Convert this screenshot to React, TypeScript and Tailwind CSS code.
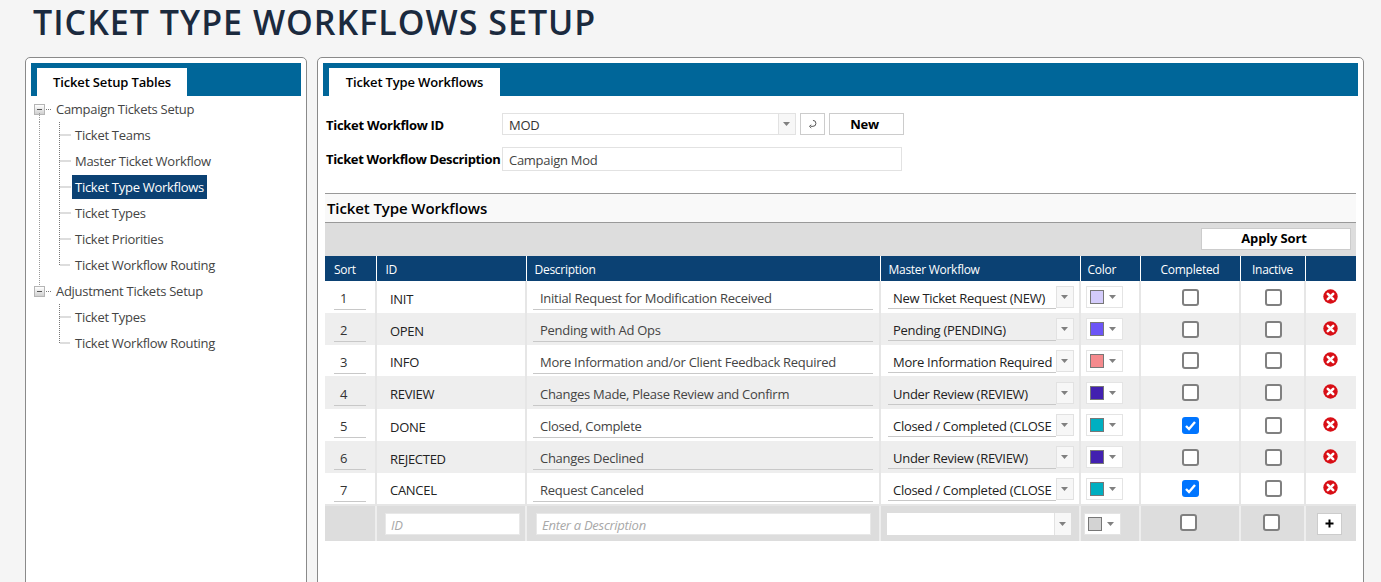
const font = { fontFamily: '"Open Sans", "Noto Sans", sans-serif' }

const rows = [
  { sort: '1', id: 'INIT', desc: 'Initial Request for Modification Received', master: 'New Ticket Request (NEW)', color: 'bg-[#d4ccfb]', done: false, h: 'h-[32px]', bg: 'bg-white' },
  { sort: '2', id: 'OPEN', desc: 'Pending with Ad Ops', master: 'Pending (PENDING)', color: 'bg-[#6c55f6]', done: false, h: 'h-[32px]', bg: 'bg-[#eeeeee]' },
  { sort: '3', id: 'INFO', desc: 'More Information and/or Client Feedback Required', master: 'More Information Required', color: 'bg-[#f58a8d]', done: false, h: 'h-[31px]', bg: 'bg-white' },
  { sort: '4', id: 'REVIEW', desc: 'Changes Made, Please Review and Confirm', master: 'Under Review (REVIEW)', color: 'bg-[#4220b0]', done: false, h: 'h-[33px]', bg: 'bg-[#eeeeee]' },
  { sort: '5', id: 'DONE', desc: 'Closed, Complete', master: 'Closed / Completed (CLOSE', color: 'bg-[#00afc1]', done: true, h: 'h-[32px]', bg: 'bg-white' },
  { sort: '6', id: 'REJECTED', desc: 'Changes Declined', master: 'Under Review (REVIEW)', color: 'bg-[#4220b0]', done: false, h: 'h-[32px]', bg: 'bg-[#eeeeee]' },
  { sort: '7', id: 'CANCEL', desc: 'Request Canceled', master: 'Closed / Completed (CLOSE', color: 'bg-[#00afc1]', done: true, h: 'h-[32px]', bg: 'bg-white' },
]

const tree = [
  {
    title: 'Campaign Tickets Setup',
    children: ['Ticket Teams', 'Master Ticket Workflow', 'Ticket Type Workflows', 'Ticket Types', 'Ticket Priorities', 'Ticket Workflow Routing'],
    trunk: true,
  },
  {
    title: 'Adjustment Tickets Setup',
    children: ['Ticket Types', 'Ticket Workflow Routing'],
    trunk: false,
  },
]

const Caret = () => (
  <svg width="8" height="4" viewBox="0 0 8 4" className="block">
    <path d="M0 0h7L3.5 4z" fill="#808080" />
  </svg>
)

const Check = ({ on }: { on: boolean }) =>
  on ? (
    <span className="flex h-[17px] w-[17px] items-center justify-center rounded-[3px] bg-[#0075ff]">
      <svg width="13" height="13" viewBox="0 0 13 13">
        <path d="M2 7l3 3 6-7" fill="none" stroke="#fff" strokeWidth="2.4" />
      </svg>
    </span>
  ) : (
    <span className="block h-[17px] w-[17px] rounded-[3px] border-2 border-[#808080] bg-white" />
  )

const DeleteIcon = () => (
  <svg width="15" height="15" viewBox="0 0 15 15" className="block">
    <circle cx="7.5" cy="7.5" r="7.2" fill="#d80f16" />
    <path d="M4.8 4.8l5.4 5.4M10.2 4.8l-5.4 5.4" stroke="#fff" strokeWidth="2.6" strokeLinecap="round" />
  </svg>
)

const Expander = () => (
  <span className="flex h-[11px] w-[11px] items-center justify-center border border-[#b5b5b5] bg-gradient-to-b from-white to-[#d0d0d0]">
    <span className="block h-[1px] w-[5px] bg-[#555]" />
  </span>
)

const Swatch = ({ color }: { color: string }) => (
  <div className="flex h-[22px] w-[37px] items-center border border-[#e4e4e4] bg-white pl-[3px]">
    <span className={`block h-[14px] w-[14px] border border-[#777] ${color}`} />
    <span className="ml-[5px]">
      <Caret />
    </span>
  </div>
)

const TreeConnector = ({ trunk, last }: { trunk: boolean; last: boolean }) => (
  <svg width="41" height="26" className="shrink-0">
    {trunk && <path d="M8.5 0v26" stroke="#999" strokeDasharray="1 1" />}
    <path d={last ? 'M28.5 0v13h11' : 'M28.5 0v26M28.5 13h11'} stroke="#777" strokeDasharray="1 1" fill="none" />
  </svg>
)

const PanelTab = ({ label, width }: { label: string; width: string }) => (
  <div className="h-[33px] bg-[#006699] pl-[6px] pt-[5px]">
    <div className={`flex h-[28px] items-center justify-center bg-white pt-[2px] text-[13px] font-semibold tracking-[-0.15px] text-black ${width}`}>{label}</div>
  </div>
)

export default function App() {
  return (
    <div className="h-[582px] overflow-hidden bg-[#f5f5f5] pl-[25px] tracking-[-0.28px]" style={font}>
      <h1 className="h-[57px] pl-[8px] text-[34px] font-semibold leading-[45px] tracking-[1px] text-[#1b2a3e]">TICKET TYPE WORKFLOWS SETUP</h1>
      <div className="flex gap-[10px]">
        {/* left tree */}
        <aside className="h-[560px] w-[282px] shrink-0 rounded-t-[5px] border border-[#8a8a8a] bg-white p-[5px]">
          <PanelTab label="Ticket Setup Tables" width="w-[150px]" />
          <div className="text-[13px] text-[#444]">
            {tree.map((group) => (
              <div key={group.title}>
                <div className="relative flex h-[26px] items-center">
                  {group.trunk ? (
                    <span className="absolute left-[8px] top-[17px] h-[9px] border-l border-dotted border-[#999]" />
                  ) : (
                    <span className="absolute left-[8px] top-0 h-[7px] border-l border-dotted border-[#999]" />
                  )}
                  <span className="ml-[3px]">
                    <Expander />
                  </span>
                  <span className="ml-[1px] w-[5px] border-t border-dotted border-[#777]" />
                  <span className="ml-[5px] pt-[2px]">{group.title}</span>
                </div>
                {group.children.map((child, i) => (
                  <div key={child} className="flex h-[26px] items-center">
                    <TreeConnector trunk={group.trunk} last={i === group.children.length - 1} />
                    <span className={child === 'Ticket Type Workflows' ? 'flex h-[24px] items-center bg-[#0b4173] px-[3px] pt-[2px] text-white' : 'px-[3px] pt-[2px]'}>{child}</span>
                  </div>
                ))}
              </div>
            ))}
          </div>
        </aside>

        {/* right content */}
        <main className="h-[560px] w-[1047px] shrink-0 rounded-t-[5px] border border-[#8a8a8a] bg-white p-[5px]">
          <PanelTab label="Ticket Type Workflows" width="w-[171px]" />
          <div className="px-[2px]">
            <div className="mt-[17px] flex h-[22px] items-center">
              <label className="w-[177px] pl-[1px] pt-[2px] text-[13px] font-bold leading-[18px] text-black">Ticket Workflow ID</label>
              <div className="flex h-[22px] w-[294px] items-center border border-[#e2e2e2] bg-white text-[13px] text-[#333]">
                <span className="flex-1 pl-[6px] pt-[3px]">MOD</span>
                <span className="flex h-full w-[17px] items-center justify-center border-l border-[#e2e2e2] bg-[#f7f7f7]">
                  <Caret />
                </span>
              </div>
              <button className="ml-[4px] flex h-[22px] w-[25px] items-center justify-center border border-[#ccc] bg-white">
                <svg width="9" height="10" viewBox="0 0 10 11">
                  <path d="M5.5 1.5a3.3 3.3 0 1 1 0 6.6H3" fill="none" stroke="#444" />
                  <path d="M3.6 6.4L1.6 8.1l2 1.9" fill="none" stroke="#444" />
                </svg>
              </button>
              <button className="ml-[4px] h-[22px] w-[75px] border border-[#ccc] bg-white pr-[4px] pt-[1px] text-[13px] font-bold text-black">New</button>
            </div>
            <div className="mt-[12px] flex h-[24px] items-center">
              <label className="w-[177px] pl-[1px] text-[13px] font-bold leading-[18px] tracking-[-0.35px] text-black">Ticket Workflow Description</label>
              <div className="flex h-[24px] w-[400px] items-center border border-[#e2e2e2] pl-[6px] pt-[3px] text-[13px] text-[#444]">Campaign Mod</div>
            </div>

            <div className="mt-[22px] flex h-[30px] items-center border-y border-[#999] bg-[#f9f9f9] pl-[2px] text-[15px] font-semibold tracking-[-0.1px] text-black">Ticket Type Workflows</div>
            <div className="flex h-[33px] justify-end bg-[#dddddd] pr-[5px] pt-[5px]">
              <button className="h-[22px] w-[150px] border border-[#ccc] bg-white pr-[4px] text-[13px] font-bold tracking-[-0.15px] text-black">Apply Sort</button>
            </div>

            <table className="w-[1031px] table-fixed border-collapse text-[12px]">
              <colgroup>
                <col className="w-[51px]" />
                <col className="w-[150px]" />
                <col className="w-[354px]" />
                <col className="w-[200px]" />
                <col className="w-[60px]" />
                <col className="w-[100px]" />
                <col className="w-[65px]" />
                <col className="w-[51px]" />
              </colgroup>
              <thead>
                <tr className="h-[25px] bg-[#0b4173] text-left font-normal text-white">
                  <th className="pl-[9px] pt-[2px] font-normal">Sort</th>
                  <th className="border-l border-white pl-[9px] pt-[2px] font-normal">ID</th>
                  <th className="border-l border-white pl-[8px] pt-[2px] font-normal">Description</th>
                  <th className="border-l border-white pl-[8px] pt-[2px] font-normal">Master Workflow</th>
                  <th className="border-l border-white pl-[7px] pt-[2px] font-normal">Color</th>
                  <th className="border-l border-white pt-[2px] text-center font-normal">Completed</th>
                  <th className="border-l border-white pt-[2px] text-center font-normal">Inactive</th>
                  <th className="border-l border-white font-normal" />
                </tr>
              </thead>
              <tbody>
                {rows.map((row) => (
                  <tr key={row.sort} className={`${row.h} ${row.bg} text-[13px] text-[#333]`}>
                    <td className="px-[9px]">
                      <div className="h-[26px] border-b border-[#c8c8c8] pl-[6px] leading-[29px]">{row.sort}</div>
                    </td>
                    <td className="border-l-2 border-[#e6e6e6] pl-[13px] pt-[5px] text-[#222]">{row.id}</td>
                    <td className="border-l-2 border-[#e6e6e6] px-[6px]">
                      <div className="h-[26px] border-b border-[#c8c8c8] pl-[7px] leading-[29px] text-[#444]">{row.desc}</div>
                    </td>
                    <td className="border-l-2 border-[#e6e6e6] pl-[7px]">
                      <div className="flex items-center">
                        <div className="h-[24px] w-[168px] overflow-hidden whitespace-nowrap border-b border-[#c8c8c8] pl-[5px] leading-[26px] text-[#222]">{row.master}</div>
                        <span className="flex h-[22px] w-[18px] items-center justify-center border border-[#e2e2e2] bg-[#f7f7f7]">
                          <Caret />
                        </span>
                      </div>
                    </td>
                    <td className="border-l-2 border-[#e6e6e6] pl-[5px]">
                      <Swatch color={row.color} />
                    </td>
                    <td className="border-l-2 border-[#e6e6e6]">
                      <div className="flex justify-center">
                        <Check on={row.done} />
                      </div>
                    </td>
                    <td className="border-l-2 border-[#e6e6e6]">
                      <div className="flex justify-center pl-[1px]">
                        <Check on={false} />
                      </div>
                    </td>
                    <td className="border-l-2 border-[#e6e6e6]">
                      <div className="flex justify-center pb-[2px] pr-[2px]">
                        <DeleteIcon />
                      </div>
                    </td>
                  </tr>
                ))}
                <tr className="h-[36px] border-t-2 border-[#e6e6e6] bg-[#dddddd] text-[13px]">
                  <td />
                  <td className="border-l-2 border-[#eeeeee] pl-[8px]">
                    <div className="flex h-[22px] w-[135px] items-center border border-[#e8e8e8] bg-white pl-[5px] pt-[4px] italic text-[#a8a8a8]">ID</div>
                  </td>
                  <td className="border-l-2 border-[#eeeeee] pl-[9px]">
                    <div className="flex h-[22px] w-[335px] items-center border border-[#e8e8e8] bg-white pl-[5px] pt-[4px] italic text-[#a8a8a8]">Enter a Description</div>
                  </td>
                  <td className="border-l-2 border-[#eeeeee] pl-[6px]">
                    <div className="flex h-[22px] w-[184px] items-center justify-end bg-white">
                      <span className="flex h-full w-[17px] items-center justify-center border-l border-[#e2e2e2] bg-[#f7f7f7]">
                        <Caret />
                      </span>
                    </div>
                  </td>
                  <td className="border-l-2 border-[#eeeeee] pl-[3px]">
                    <Swatch color="bg-[#d3d3d3]" />
                  </td>
                  <td className="border-l-2 border-[#eeeeee]">
                    <div className="flex justify-center pb-[3px] pr-[4px]">
                      <Check on={false} />
                    </div>
                  </td>
                  <td className="border-l-2 border-[#eeeeee]">
                    <div className="flex justify-center pb-[3px] pr-[3px]">
                      <Check on={false} />
                    </div>
                  </td>
                  <td className="border-l-2 border-[#eeeeee]">
                    <div className="flex justify-center pr-[4px]">
                      <button className="flex h-[22px] w-[25px] items-center justify-center border border-[#ccc] bg-white">
                        <svg width="9" height="9" viewBox="0 0 9 9">
                          <path d="M4.5 0.5v8M0.5 4.5h8" stroke="#000" strokeWidth="2" />
                        </svg>
                      </button>
                    </div>
                  </td>
                </tr>
              </tbody>
            </table>
          </div>
        </main>
      </div>
    </div>
  )
}
